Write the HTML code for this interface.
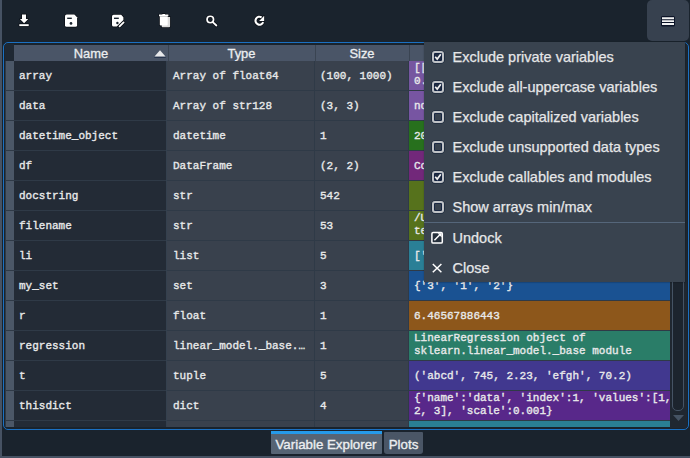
<!DOCTYPE html>
<html><head><meta charset="utf-8"><style>
*{margin:0;padding:0;box-sizing:border-box}
html,body{width:690px;height:458px;overflow:hidden;background:#1a232d}
body{position:relative;font-family:"Liberation Sans",sans-serif;color:#e8e9ea}
.a{position:absolute}
.hd{height:17px;line-height:17px;text-align:center;font-size:12.9px;color:#eceef0;-webkit-text-stroke:0.3px #eceef0}
.c{font-family:"Liberation Mono",monospace;font-size:11px;line-height:29px;padding-left:5px;padding-top:1px;white-space:pre;overflow:hidden;-webkit-text-stroke:0.35px #e8e9ea}
.two{line-height:13px;padding-top:1px}
.mi{font-size:14.5px;line-height:20px;white-space:pre;-webkit-text-stroke:0.25px #e0e1e3}
.tb{height:20px;line-height:20px;text-align:center;font-size:13.3px;color:#eceef0;-webkit-text-stroke:0.35px #eceef0}
</style></head><body>
<div class="a" style="left:2px;top:0;width:688px;height:456px;background:#1a232d"></div>
<div class="a" style="left:0;top:0;width:2px;height:458px;background:#465263"></div>
<div class="a" style="left:0;top:456px;width:690px;height:2px;background:#465263"></div>
<svg class="a" style="left:0;top:0" width="300" height="40" viewBox="0 0 300 40">
<g fill="#05080e" stroke="#05080e" stroke-width="1.3" stroke-linejoin="round" opacity="0.85">
<path d="M22 14.5h4v4.6h2.3l-4.2 4.2-4.2-4.2h2.1z"/>
<rect x="19.3" y="24.2" width="9.4" height="1.9"/>
<path d="M66.6 14.6h7.8l2.7 2.7v7.9a1.6 1.6 0 0 1-1.6 1.6h-8.9a1.6 1.6 0 0 1-1.6-1.6v-9a1.6 1.6 0 0 1 1.6-1.6z"/>
<path d="M113.6 14.8h7.6l2.2 2.4v2.8l-6.6 6.6h-3.2a1.6 1.6 0 0 1-1.6-1.6v-8.6a1.6 1.6 0 0 1 1.6-1.6z"/>
<path d="M119.6 26.4l4-4" stroke-width="3.1" stroke-linecap="round"/>
<path d="M161.5 17h8.6v9.3a1 1 0 0 1-1 1h-6.6a1 1 0 0 1-1-1z"/>
<path d="M159.8 16.2h7.9v8.5a0.8 0.8 0 0 1-0.8 0.8h-6.3a0.8 0.8 0 0 1-0.8-0.8z"/>
<path d="M159 14.6h9.4v1.6h-9.4z M162.4 13.9h2.6v1h-2.6z"/>
<circle cx="210.3" cy="19.5" r="3.25" fill="none" stroke-width="3"/>
<path d="M212.8 22.1l3.6 3.4" stroke-width="3.1" stroke-linecap="round"/>
<path d="M263.2 22.2A4 4 0 1 1 261.6 17.3" fill="none" stroke-width="3.4"/>
<path d="M264.2 15.8v5.1h-5.1z"/>
</g>
<g stroke="#0a0f18" stroke-width="0" >
<path d="M22 14.5h4v4.6h2.3l-4.2 4.2-4.2-4.2h2.1z" fill="#fff"/>
<rect x="19.3" y="24.2" width="9.4" height="1.9" fill="#fff"/>
<path d="M66.6 14.6h7.8l2.7 2.7v7.9a1.6 1.6 0 0 1-1.6 1.6h-8.9a1.6 1.6 0 0 1-1.6-1.6v-9a1.6 1.6 0 0 1 1.6-1.6z" fill="#fff"/>
<rect x="67.2" y="17.6" width="4.6" height="1.4" fill="#1a232d"/>
<circle cx="71" cy="23.4" r="1.35" fill="#1a232d"/>
<path d="M113.6 14.8h7.6l2.2 2.4v2.8l-6.6 6.6h-3.2a1.6 1.6 0 0 1-1.6-1.6v-8.6a1.6 1.6 0 0 1 1.6-1.6z" fill="#fff"/>
<rect x="114" y="17.6" width="4.8" height="1.4" fill="#1a232d"/>
<circle cx="117.4" cy="23" r="1.2" fill="#1a232d"/>
<path d="M119.6 26.4l4-4" stroke="#fff" stroke-width="1.8" stroke-linecap="round"/>
<path d="M161.5 17h8.6v9.3a1 1 0 0 1-1 1h-6.6a1 1 0 0 1-1-1z" fill="#dcdcdc"/>
<path d="M159.8 16.2h7.9v8.5a0.8 0.8 0 0 1-0.8 0.8h-6.3a0.8 0.8 0 0 1-0.8-0.8z" fill="#fff"/>
<path d="M159 14.6h9.4v1.6h-9.4z M162.4 13.9h2.6v1h-2.6z" fill="#fff"/>
<path d="M160.8 26.2h1" stroke="#1a232d" stroke-width="1"/>
<circle cx="210.3" cy="19.5" r="3.25" fill="none" stroke="#fff" stroke-width="1.7"/>
<path d="M212.8 22.1l3.6 3.4" stroke="#fff" stroke-width="1.8" stroke-linecap="round"/>
<path d="M263.2 22.2A4 4 0 1 1 261.6 17.3" fill="none" stroke="#fff" stroke-width="2.1"/>
<path d="M264.2 15.8v5.1h-5.1z" fill="#fff"/>
</g></svg>
<div class="a" style="left:647px;top:0px;width:42px;height:41px;background:#37414f;border-radius:5px"></div>
<svg class="a" style="left:660px;top:15px" width="16" height="12" viewBox="0 0 16 12"><rect x="1" y="1" width="14" height="10.6" rx="1.5" fill="#0c1428"/><path d="M2 3.2h12M2 6.1h12M2 9h12" stroke="#f2f2f2" stroke-width="1.9"/></svg>
<div class="a" style="left:3px;top:42px;width:686px;height:388px;border:1px solid #1b70c2;border-radius:5px;background:#19232d"></div>
<div class="a" style="left:5px;top:44px;width:9px;height:17px;background:#1f2833"></div>
<div class="a" style="left:14px;top:45px;width:656px;height:16px;background:#4a5567"></div>
<div class="a" style="left:168px;top:45px;width:1px;height:16px;background:#3a4452"></div>
<div class="a" style="left:315px;top:45px;width:1px;height:16px;background:#3a4452"></div>
<div class="a" style="left:409px;top:45px;width:1px;height:16px;background:#3a4452"></div>
<div class="a hd" style="left:14px;top:44.5px;width:154px">Name</div>
<div class="a hd" style="left:168px;top:44.5px;width:147px">Type</div>
<div class="a hd" style="left:315px;top:44.5px;width:94px">Size</div>
<svg class="a" style="left:154px;top:50px" width="12" height="8" viewBox="0 0 12 8"><path d="M0.3 7.3h11.4" stroke="#1e2c48" stroke-width="1"/><path d="M0.5 6.5L6 0.2L11.5 6.5z" fill="#e8e9eb"/></svg>
<div class="a" style="left:5px;top:61px;width:665px;height:366px;background:#2f3a47"></div>
<div class="a" style="left:6px;top:61px;width:8px;height:29px;background:#4b5767"></div>
<div class="a c" style="left:14px;top:61px;width:152px;height:29px;background:#232b36">array</div>
<div class="a c" style="left:167px;top:61px;padding-left:6px;width:147px;height:29px;background:#39414d">Array of float64</div>
<div class="a c" style="left:315px;top:61px;width:93px;height:29px;background:#39414d">(100, 1000)</div>
<div class="a c two" style="left:409px;top:61px;width:261px;height:29px;background:#7656a0">[[0.47474164 0.91394213 ...<br>0.83063718 0.5...</div>
<div class="a" style="left:6px;top:91px;width:8px;height:29px;background:#4b5767"></div>
<div class="a c" style="left:14px;top:91px;width:152px;height:29px;background:#232b36">data</div>
<div class="a c" style="left:167px;top:91px;padding-left:6px;width:147px;height:29px;background:#39414d">Array of str128</div>
<div class="a c" style="left:315px;top:91px;width:93px;height:29px;background:#39414d">(3, 3)</div>
<div class="a c" style="left:409px;top:91px;width:261px;height:29px;background:#7755a2">ndarray object of numpy module</div>
<div class="a" style="left:6px;top:121px;width:8px;height:29px;background:#4b5767"></div>
<div class="a c" style="left:14px;top:121px;width:152px;height:29px;background:#232b36">datetime_object</div>
<div class="a c" style="left:167px;top:121px;padding-left:6px;width:147px;height:29px;background:#39414d">datetime</div>
<div class="a c" style="left:315px;top:121px;width:93px;height:29px;background:#39414d">1</div>
<div class="a c" style="left:409px;top:121px;width:261px;height:29px;background:#27701d">2020-02-23 10:14:22</div>
<div class="a" style="left:6px;top:151px;width:8px;height:29px;background:#4b5767"></div>
<div class="a c" style="left:14px;top:151px;width:152px;height:29px;background:#232b36">df</div>
<div class="a c" style="left:167px;top:151px;padding-left:6px;width:147px;height:29px;background:#39414d">DataFrame</div>
<div class="a c" style="left:315px;top:151px;width:93px;height:29px;background:#39414d">(2, 2)</div>
<div class="a c" style="left:409px;top:151px;width:261px;height:29px;background:#72287a">Column names: col1, col2</div>
<div class="a" style="left:6px;top:181px;width:8px;height:29px;background:#4b5767"></div>
<div class="a c" style="left:14px;top:181px;width:152px;height:29px;background:#232b36">docstring</div>
<div class="a c" style="left:167px;top:181px;padding-left:6px;width:147px;height:29px;background:#39414d">str</div>
<div class="a c" style="left:315px;top:181px;width:93px;height:29px;background:#39414d">542</div>
<div class="a c" style="left:409px;top:181px;width:261px;height:29px;background:#56721c"></div>
<div class="a" style="left:6px;top:211px;width:8px;height:29px;background:#4b5767"></div>
<div class="a c" style="left:14px;top:211px;width:152px;height:29px;background:#232b36">filename</div>
<div class="a c" style="left:167px;top:211px;padding-left:6px;width:147px;height:29px;background:#39414d">str</div>
<div class="a c" style="left:315px;top:211px;width:93px;height:29px;background:#39414d">53</div>
<div class="a c two" style="left:409px;top:211px;width:261px;height:29px;background:#56721c">/Users/user/Desktop/<br>test.py</div>
<div class="a" style="left:6px;top:241px;width:8px;height:29px;background:#4b5767"></div>
<div class="a c" style="left:14px;top:241px;width:152px;height:29px;background:#232b36">li</div>
<div class="a c" style="left:167px;top:241px;padding-left:6px;width:147px;height:29px;background:#39414d">list</div>
<div class="a c" style="left:315px;top:241px;width:93px;height:29px;background:#39414d">5</div>
<div class="a c" style="left:409px;top:241px;width:261px;height:29px;background:#2a7f96">[&#x27;apple&#x27;, &#x27;banana&#x27;, &#x27;cherry&#x27;]</div>
<div class="a" style="left:6px;top:271px;width:8px;height:29px;background:#4b5767"></div>
<div class="a c" style="left:14px;top:271px;width:152px;height:29px;background:#232b36">my_set</div>
<div class="a c" style="left:167px;top:271px;padding-left:6px;width:147px;height:29px;background:#39414d">set</div>
<div class="a c" style="left:315px;top:271px;width:93px;height:29px;background:#39414d">3</div>
<div class="a c" style="left:409px;top:271px;width:261px;height:29px;background:#1a5292">{&#x27;3&#x27;, &#x27;1&#x27;, &#x27;2&#x27;}</div>
<div class="a" style="left:6px;top:301px;width:8px;height:29px;background:#4b5767"></div>
<div class="a c" style="left:14px;top:301px;width:152px;height:29px;background:#232b36">r</div>
<div class="a c" style="left:167px;top:301px;padding-left:6px;width:147px;height:29px;background:#39414d">float</div>
<div class="a c" style="left:315px;top:301px;width:93px;height:29px;background:#39414d">1</div>
<div class="a c" style="left:409px;top:301px;width:261px;height:29px;background:#8d571b">6.46567886443</div>
<div class="a" style="left:6px;top:331px;width:8px;height:29px;background:#4b5767"></div>
<div class="a c" style="left:14px;top:331px;width:152px;height:29px;background:#232b36">regression</div>
<div class="a c" style="left:167px;top:331px;padding-left:6px;width:147px;height:29px;background:#39414d">linear_model._base.…</div>
<div class="a c" style="left:315px;top:331px;width:93px;height:29px;background:#39414d">1</div>
<div class="a c two" style="left:409px;top:331px;width:261px;height:29px;background:#2a7d68">LinearRegression object of<br>sklearn.linear_model._base module</div>
<div class="a" style="left:6px;top:361px;width:8px;height:29px;background:#4b5767"></div>
<div class="a c" style="left:14px;top:361px;width:152px;height:29px;background:#232b36">t</div>
<div class="a c" style="left:167px;top:361px;padding-left:6px;width:147px;height:29px;background:#39414d">tuple</div>
<div class="a c" style="left:315px;top:361px;width:93px;height:29px;background:#39414d">5</div>
<div class="a c" style="left:409px;top:361px;width:261px;height:29px;background:#41388f">(&#x27;abcd&#x27;, 745, 2.23, &#x27;efgh&#x27;, 70.2)</div>
<div class="a" style="left:6px;top:391px;width:8px;height:29px;background:#4b5767"></div>
<div class="a c" style="left:14px;top:391px;width:152px;height:29px;background:#232b36">thisdict</div>
<div class="a c" style="left:167px;top:391px;padding-left:6px;width:147px;height:29px;background:#39414d">dict</div>
<div class="a c" style="left:315px;top:391px;width:93px;height:29px;background:#39414d">4</div>
<div class="a c two" style="left:409px;top:391px;width:261px;height:29px;background:#58288a">{&#x27;name&#x27;:&#x27;data&#x27;, &#x27;index&#x27;:1, &#x27;values&#x27;:[1,<br>2, 3], &#x27;scale&#x27;:0.001}</div>
<div class="a" style="left:6px;top:421px;width:8px;height:6px;background:#4b5767"></div>
<div class="a c" style="left:14px;top:421px;width:152px;height:6px;background:#232b36"></div>
<div class="a c" style="left:167px;top:421px;padding-left:6px;width:147px;height:6px;background:#39414d"></div>
<div class="a c" style="left:315px;top:421px;width:93px;height:6px;background:#39414d"></div>
<div class="a c" style="left:409px;top:421px;width:261px;height:6px;background:#2a7f94"></div>
<div class="a" style="left:166px;top:61px;width:1px;height:366px;background:#34404e"></div>
<div class="a" style="left:670px;top:44px;width:17px;height:384px;background:#1f2731"></div>
<div class="a" style="left:672px;top:62px;width:12px;height:349px;border:1px solid #455364;border-radius:5px;background:#1c242e"></div>
<svg class="a" style="left:673px;top:415px" width="11" height="6" viewBox="0 0 11 6"><path d="M0 0h11L5.5 6z" fill="#455364"/></svg>
<div class="a" style="left:271px;top:431px;width:111px;height:23px;background:#566474;border-radius:0 0 1px 1px"></div>
<div class="a" style="left:271px;top:431px;width:111px;height:3px;background:#259ae9"></div>
<div class="a tb" style="left:270.5px;top:435px;width:111px">Variable Explorer</div>
<div class="a" style="left:384px;top:432px;width:39px;height:22px;background:#4a5666;border-radius:1px 1px 3px 3px"></div>
<div class="a tb" style="left:384px;top:435px;width:39px">Plots</div>
<div class="a" style="left:424px;top:42px;width:261px;height:240px;background:#39434f;box-shadow:0 0 1.5px 0.5px rgba(10,14,20,0.55)"></div>
<div class="a" style="left:432px;top:51px;width:12px;height:12px;border:2px solid #bfc2c6;border-radius:3px;background:#1f2b40;box-shadow:0 0 0 0.6px #142238, inset 0 0 0 0.8px #102040"></div>
<svg class="a" style="left:432px;top:51px" width="12" height="12" viewBox="0 0 12 12"><path d="M3.2 5.8l2 2.3L8.8 3.2" fill="none" stroke="#f0f0f0" stroke-width="1.7"/></svg>
<div class="a mi" style="left:452.5px;top:47px">Exclude private variables</div>
<div class="a" style="left:432px;top:81px;width:12px;height:12px;border:2px solid #bfc2c6;border-radius:3px;background:#1f2b40;box-shadow:0 0 0 0.6px #142238, inset 0 0 0 0.8px #102040"></div>
<svg class="a" style="left:432px;top:81px" width="12" height="12" viewBox="0 0 12 12"><path d="M3.2 5.8l2 2.3L8.8 3.2" fill="none" stroke="#f0f0f0" stroke-width="1.7"/></svg>
<div class="a mi" style="left:452.5px;top:77px">Exclude all-uppercase variables</div>
<div class="a" style="left:432px;top:111px;width:12px;height:12px;border:2px solid #bfc2c6;border-radius:3px;background:transparent;box-shadow:0 0 0 0.6px #142238, inset 0 0 0 0.8px #102040"></div>
<div class="a mi" style="left:452.5px;top:107px">Exclude capitalized variables</div>
<div class="a" style="left:432px;top:141px;width:12px;height:12px;border:2px solid #bfc2c6;border-radius:3px;background:transparent;box-shadow:0 0 0 0.6px #142238, inset 0 0 0 0.8px #102040"></div>
<div class="a mi" style="left:452.5px;top:137px">Exclude unsupported data types</div>
<div class="a" style="left:432px;top:171px;width:12px;height:12px;border:2px solid #bfc2c6;border-radius:3px;background:#1f2b40;box-shadow:0 0 0 0.6px #142238, inset 0 0 0 0.8px #102040"></div>
<svg class="a" style="left:432px;top:171px" width="12" height="12" viewBox="0 0 12 12"><path d="M3.2 5.8l2 2.3L8.8 3.2" fill="none" stroke="#f0f0f0" stroke-width="1.7"/></svg>
<div class="a mi" style="left:452.5px;top:167px">Exclude callables and modules</div>
<div class="a" style="left:432px;top:201px;width:12px;height:12px;border:2px solid #bfc2c6;border-radius:3px;background:transparent;box-shadow:0 0 0 0.6px #142238, inset 0 0 0 0.8px #102040"></div>
<div class="a mi" style="left:452.5px;top:197px">Show arrays min/max</div>
<div class="a" style="left:424px;top:222px;width:261px;height:1px;background:#55667a"></div>
<svg class="a" style="left:430px;top:231px" width="14" height="14" viewBox="0 0 14 14"><rect x="1.9" y="1.5" width="10.4" height="10.6" rx="1.2" fill="#26303c" stroke="#fff" stroke-width="1.5"/><path d="M4.4 9.2L10.6 3" stroke="#fff" stroke-width="1.5"/><path d="M7.6 2.3h4.1v4.1z" fill="#fff"/></svg>
<div class="a mi" style="left:452.5px;top:228px">Undock</div>
<svg class="a" style="left:431px;top:262px" width="12" height="12" viewBox="0 0 12 12"><path d="M1.8 2l8.6 8.3M10.4 2l-8.6 8.3" stroke="#fff" stroke-width="1.5"/></svg>
<div class="a mi" style="left:452.5px;top:258px">Close</div>
</body></html>
